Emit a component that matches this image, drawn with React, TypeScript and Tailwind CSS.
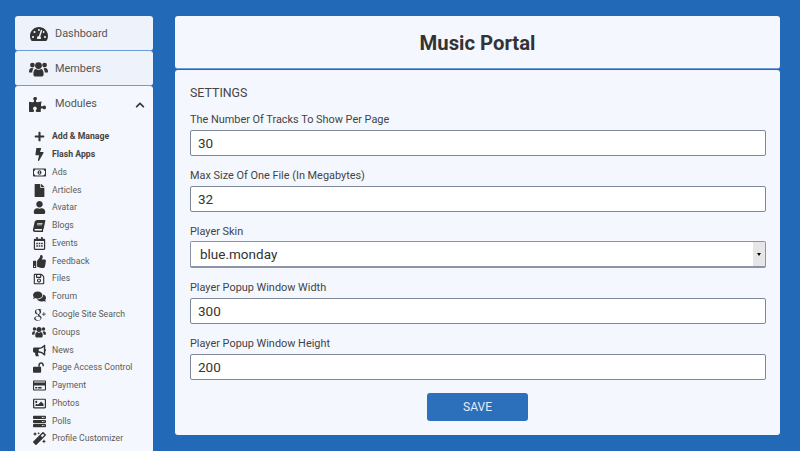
import type { IconType } from "react-icons";
import {
  FaBolt,
  FaBook,
  FaBullhorn,
  FaChevronUp,
  FaComments,
  FaFile,
  FaMagic,
  FaPlus,
  FaPuzzlePiece,
  FaRegCalendarAlt,
  FaRegCreditCard,
  FaRegImage,
  FaRegMoneyBillAlt,
  FaRegSave,
  FaServer,
  FaTachometerAlt,
  FaThumbsUp,
  FaUser,
} from "react-icons/fa";
import { TiSocialGooglePlus } from "react-icons/ti";

// three busts, closer to the older font awesome "users" than the current one
function UsersIcon({ className }: { className?: string }) {
  return (
    <svg viewBox="0 0 20 16" fill="currentColor" className={className}>
      <circle cx="3.6" cy="3.8" r="2.5" />
      <circle cx="16.4" cy="3.8" r="2.5" />
      <circle cx="10" cy="4.4" r="3.6" />
      <path d="M0 11.2C0 8.6 1 7 3 7c.8 0 1.2.3 1.8.6-.9 1-1.3 2.4-1.4 4.2H1c-.6 0-1-.2-1-.6z" />
      <path d="M20 11.2c0-2.6-1-4.2-3-4.2-.8 0-1.2.3-1.8.6.9 1 1.3 2.4 1.4 4.2H19c.6 0 1-.2 1-.6z" />
      <path d="M4.6 13.4c0-3.2 1-5.4 2.8-5.4.8.6 1.6.9 2.6.9s1.8-.3 2.6-.9c1.8 0 2.8 2.2 2.8 5.4 0 1.6-1 2.6-2.4 2.6H7c-1.4 0-2.4-1-2.4-2.6z" />
    </svg>
  );
}

// padlock with the shackle open to the right
function UnlockIcon({ className }: { className?: string }) {
  return (
    <svg viewBox="0 0 16 13" fill="currentColor" className={className}>
      <rect x="0" y="5.5" width="10" height="7.5" rx="1" />
      <path d="M6.6 5.5V3.4C6.6 1.5 8.1 0 10 0s3.4 1.5 3.4 3.4V5h-1.8V3.4c0-.9-.7-1.6-1.6-1.6s-1.6.7-1.6 1.6v2.1z" />
    </svg>
  );
}

type ModuleItem = {
  label: string;
  icon: IconType | typeof UsersIcon;
  bold?: boolean;
  iconClass?: string;
};

const moduleItems: ModuleItem[] = [
  { label: "Add & Manage", icon: FaPlus, bold: true, iconClass: "h-[11px] w-[11px]" },
  { label: "Flash Apps", icon: FaBolt, bold: true },
  { label: "Ads", icon: FaRegMoneyBillAlt },
  { label: "Articles", icon: FaFile },
  { label: "Avatar", icon: FaUser },
  { label: "Blogs", icon: FaBook, iconClass: "h-[12px] w-[12px] -skew-x-12" },
  { label: "Events", icon: FaRegCalendarAlt },
  { label: "Feedback", icon: FaThumbsUp },
  { label: "Files", icon: FaRegSave, iconClass: "h-[12px] w-[12px]" },
  { label: "Forum", icon: FaComments },
  { label: "Google Site Search", icon: TiSocialGooglePlus, iconClass: "h-[19px] w-[19px] shrink-0" },
  { label: "Groups", icon: UsersIcon, iconClass: "h-[12px] w-[14px]" },
  { label: "News", icon: FaBullhorn },
  { label: "Page Access Control", icon: UnlockIcon, iconClass: "h-[11px] w-[13px]" },
  { label: "Payment", icon: FaRegCreditCard },
  { label: "Photos", icon: FaRegImage },
  { label: "Polls", icon: FaServer },
  { label: "Profile Customizer", icon: FaMagic },
];

const fields = [
  { label: "The Number Of Tracks To Show Per Page", value: "30" },
  { label: "Max Size Of One File (In Megabytes)", value: "32" },
  { label: "Player Skin", value: "blue.monday", select: true },
  { label: "Player Popup Window Width", value: "300" },
  { label: "Player Popup Window Height", value: "200" },
];

function TopLink({ label, icon: Icon, iconClass }: { label: string; icon: IconType | typeof UsersIcon; iconClass: string }) {
  return (
    <div className="flex h-[35px] items-center rounded-[3px] border-b border-[#6b9cd8] bg-[#eef3fb] pt-[2px] pl-[14px]">
      <span className="flex w-[19px] justify-center">
        <Icon className={`${iconClass} text-[#333333]`} />
      </span>
      <span className="ml-[7px] text-[10.9px] text-[#555555]">{label}</span>
    </div>
  );
}

export default function App() {
  return (
    <div className="flex h-[451px] items-start gap-[22px] overflow-hidden bg-[#2269b8] pt-[16px] pl-[15px] font-['Roboto',sans-serif]">
      <aside className="flex w-[138px] shrink-0 flex-col">
        <TopLink label="Dashboard" icon={FaTachometerAlt} iconClass="h-[18px] w-[18px]" />
        <TopLink label="Members" icon={UsersIcon} iconClass="h-[16px] w-[19px]" />
        <div className="rounded-[3px] bg-[#f4f7fd]">
          <div className="flex h-[35px] items-center pt-[2px] pr-[8px] pl-[14px]">
            <FaPuzzlePiece className="h-[17px] w-[17px] text-[#333333]" />
            <span className="ml-[9px] flex-1 text-[10.9px] text-[#555555]">Modules</span>
            <FaChevronUp className="h-[10px] w-[10px] text-[#333333]" />
          </div>
          <ul className="pt-[7px] pb-[20px] pl-[17px]">
            {moduleItems.map(({ label, icon: Icon, bold, iconClass }) => (
              <li key={label} className="flex h-[17.77px] items-center">
                <span className="flex h-[13px] w-[20px] items-center justify-center pr-[6px]">
                  <Icon className={`${iconClass ?? "h-[13px] w-[13px]"} text-[#333333]`} />
                </span>
                <span
                  className={
                    bold
                      ? "text-[8.7px] font-bold text-[#444444]"
                      : "text-[8.7px] text-[#5c5c5c]"
                  }
                >
                  {label}
                </span>
              </li>
            ))}
          </ul>
        </div>
      </aside>

      <main className="flex w-[605px] shrink-0 flex-col gap-[1px]">
        <div className="flex h-[53px] items-center justify-center rounded-[3px] border-b border-[#6b9cd8] bg-[#f4f7fd] pt-[2px]">
          <h1 className="text-[20.3px] font-bold text-[#333333]">Music Portal</h1>
        </div>
        <div className="h-[365px] rounded-[3px] bg-[#f4f7fd] px-[15px] pt-[15px]">
          <h2 className="text-[12.4px] leading-[15px] text-[#444444]">SETTINGS</h2>
          <div className="mt-[13px] flex flex-col gap-[11px]">
            {fields.map((field) => (
              <div key={field.label} className="h-[45px]">
                <label className="block text-[10.9px] leading-[14px] text-[#444444]">
                  {field.label}
                </label>
                {field.select ? (
                  <div className="mt-[2px] flex h-[27px] w-[576px] overflow-hidden rounded-[2px] border border-b-2 border-[#8a94a6] bg-white">
                    <select
                      defaultValue={field.value}
                      className="flex-1 appearance-none bg-white pl-[9px] text-[13.5px] text-[#333333] outline-none"
                    >
                      <option>{field.value}</option>
                    </select>
                    <div className="flex w-[12px] items-center justify-center bg-[#e6e6e6]">
                      <div className="h-0 w-0 border-x-[2px] border-t-[3px] border-x-transparent border-t-black" />
                    </div>
                  </div>
                ) : (
                  <input
                    readOnly
                    value={field.value}
                    className="mt-[3px] block h-[26px] w-[576px] rounded-[2px] border border-[#7d8797] bg-white pl-[7px] text-[13.5px] text-[#333333] outline-none"
                  />
                )}
              </div>
            ))}
          </div>
          <div className="mt-[11px] flex justify-center">
            <button className="h-[28px] w-[101px] rounded-[3px] bg-[#2c6fba] text-[12px] text-[#e4ecf7]">
              SAVE
            </button>
          </div>
        </div>
      </main>
    </div>
  );
}
